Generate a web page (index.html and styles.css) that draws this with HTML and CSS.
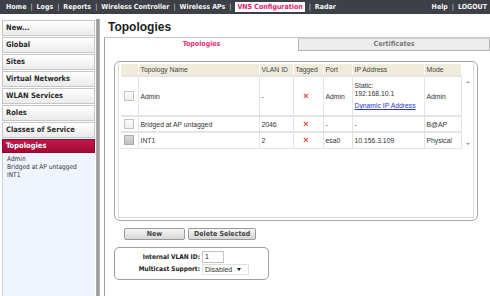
FILE: index.html
```html
<!DOCTYPE html>
<html>
<head>
<meta charset="utf-8">
<link rel="stylesheet" href="styles.css">
</head>
<body>
<div class="topbar">
  <div class="nav">
    <span>Home</span><span class="sep">|</span><span>Logs</span><span class="sep">|</span><span>Reports</span><span class="sep">|</span><span>Wireless Controller</span><span class="sep">|</span><span>Wireless APs</span><span class="sep">|</span><span class="active">VNS Configuration</span><span class="sep">|</span><span>Radar</span>
  </div>
  <div class="nav">
    <span>Help</span><span class="sep">|</span><span>LOGOUT</span>
  </div>
</div>
<div class="main">
  <div class="sidebar">
    <div class="item">New...</div>
    <div class="item">Global</div>
    <div class="item">Sites</div>
    <div class="item">Virtual Networks</div>
    <div class="item">WLAN Services</div>
    <div class="item">Roles</div>
    <div class="item">Classes of Service</div>
    <div class="item selected">Topologies</div>
    <div class="submenu">
      <div>Admin</div>
      <div>Bridged at AP untagged</div>
      <div>INT1</div>
    </div>
  </div>
  <div class="splitter"></div>
  <div class="content">
    <div class="title">Topologies</div>
    <div class="panel">
      <div class="tabs">
        <div class="tab active">Topologies</div>
        <div class="tab">Certificates</div>
      </div>
      <div class="tablebox">
        <div class="inner">
          <table class="grid">
            <colgroup>
              <col class="c-chk"><col class="c-name"><col class="c-vlan"><col class="c-tag"><col class="c-port"><col class="c-ip"><col class="c-mode"><col class="c-scroll">
            </colgroup>
            <thead>
              <tr>
                <th></th><th>Topology Name</th><th>VLAN ID</th><th>Tagged</th><th>Port</th><th>IP Address</th><th>Mode</th><th class="scrollhead"></th>
              </tr>
            </thead>
            <tbody>
              <tr class="tall">
                <td class="chk"><span class="box"></span></td>
                <td>Admin</td>
                <td>-</td>
                <td class="x">×</td>
                <td>Admin</td>
                <td class="ip"><div>Static:</div><div>192.168.10.1</div><div class="link">Dynamic IP Address</div></td>
                <td>Admin</td>
                <td class="scroll" rowspan="3"><div class="scrollinner"><span class="up"></span><span class="down"></span></div></td>
              </tr>
              <tr>
                <td class="chk"><span class="box"></span></td>
                <td>Bridged at AP untagged</td>
                <td>2046</td>
                <td class="x">×</td>
                <td>-</td>
                <td>-</td>
                <td>B@AP</td>
              </tr>
              <tr>
                <td class="chk"><span class="box dis"></span></td>
                <td>INT1</td>
                <td>2</td>
                <td class="x">×</td>
                <td>esa0</td>
                <td>10.156.3.109</td>
                <td>Physical</td>
              </tr>
            </tbody>
          </table>
        </div>
      </div>
      <div class="buttons">
        <div class="btn btn-new">New</div>
        <div class="btn">Delete Selected</div>
      </div>
      <div class="formbox">
        <div class="frow"><span class="lbl">Internal VLAN ID:</span><span class="input">1</span></div>
        <div class="frow"><span class="lbl">Multicast Support:</span><span class="select">Disabled<span class="caret"></span></span></div>
      </div>
    </div>
  </div>
</div>
</body>
</html>
```
FILE: styles.css
```css
* { box-sizing: border-box; }
html, body { margin: 0; padding: 0; }
body {
  width: 490px;
  height: 296px;
  overflow: hidden;
  background: #fff;
  font-family: "Liberation Sans", Arial, sans-serif;
  color: #333;
}
.topbar {
  height: 14px;
  background: #3d4047;
  display: flex;
  justify-content: space-between;
  align-items: center;
  padding: 0 3px 0 6px;
}
.nav {
  display: flex;
  align-items: center;
  font-family: "DejaVu Sans Condensed", "Liberation Sans", sans-serif;
  font-stretch: condensed;
  font-weight: bold;
  font-size: 7px;
  color: #f4f4f4;
}
.nav .sep { margin: 0 4px; color: #ddd; font-weight: normal; }
.nav .active {
  background: #fff;
  color: #e0206e;
  padding: 0 2px;
  line-height: 10px;
}
.main {
  display: flex;
  height: 282px;
}
.sidebar {
  width: 93px;
  margin-left: 2px;
  padding-top: 6px;
  display: flex;
  flex-direction: column;
}
.item {
  height: 16px;
  margin-bottom: 1px;
  border: 1px solid #c6c6c6;
  background: linear-gradient(#ffffff, #ebebeb);
  font-family: "DejaVu Sans Condensed", "Liberation Sans", sans-serif;
  font-stretch: condensed;
  font-weight: bold;
  font-size: 7.5px;
  color: #2a2a2a;
  padding-left: 3px;
  line-height: 14px;
}
.item.selected {
  background: linear-gradient(#c0184a, #a50a36);
  border-color: #8e0a2e;
  color: #fff;
  margin-bottom: 0;
  height: 14px;
  line-height: 12px;
}
.submenu {
  flex: 1;
  background: #eef5fe;
  border-left: 1px solid #c9d3dd;
  padding: 2px 0 0 4px;
  font-family: "DejaVu Sans Condensed", "Liberation Sans", sans-serif;
  font-stretch: condensed;
  font-size: 6.5px;
  line-height: 8px;
  color: #333;
}
.splitter {
  width: 4px;
  margin-top: 5px;
  margin-left: 1px;
  background: linear-gradient(90deg, #b8b8b8, #8d8d8d 50%, #c4c4c4);
}
.content {
  flex: 1;
  margin-left: 4px;
  display: flex;
  flex-direction: column;
}
.title {
  height: 23px;
  padding: 4px 0 0 4px;
  font-size: 12px;
  font-weight: bold;
  line-height: 19px;
  color: #1e1e1e;
}
.panel {
  flex: 1;
  border-left: 1px solid #9c9c9c;
  border-top: 1px solid #c8c8c8;
}
.tabs {
  display: flex;
  height: 13px;
}
.tab {
  font-family: "DejaVu Sans Condensed", "Liberation Sans", sans-serif;
  font-stretch: condensed;
  font-weight: bold;
  font-size: 7px;
  line-height: 12px;
  text-align: center;
}
.tab.active {
  width: 193px;
  color: #e23272;
}
.tab:not(.active) {
  flex: 1;
  background: #ececec;
  border: 1px solid #b4b4b4;
  border-top-color: #d0d0d0;
  color: #7a7a7a;
  line-height: 11px;
}
.tablebox {
  margin: 10px 0 0 9px;
  width: 364px;
  height: 160px;
  border: 1px solid #a6a6a6;
  border-radius: 6px;
  padding: 2px 3px 2px 3px;
}
.inner {
  height: 100%;
  border: 1px solid #dcdcd2;
  border-top: none;
  padding-left: 2px;
}
.grid {
  border-collapse: collapse;
  table-layout: fixed;
  width: 352px;
  font-size: 6.8px;
  color: #333;
}
.c-chk { width: 17px; }
.c-name { width: 121px; }
.c-vlan { width: 34px; }
.c-tag { width: 30px; }
.c-port { width: 29px; }
.c-ip { width: 72px; }
.c-mode { width: 37px; }
.c-scroll { width: 12px; }
.grid th {
  height: 12px;
  background: #efecdc;
  font-weight: normal;
  text-align: left;
  padding: 0 0 0 2px;
  color: #444;
  border-left: 1px solid #fff;
}
.grid th:first-child { border-left: none; }
.grid th.scrollhead { background: #fff; }
.grid td {
  height: 16px;
  padding: 0 0 0 2px;
  border: 1px solid #e4e4e4;
  border-top-width: 2px;
  vertical-align: middle;
  white-space: nowrap;
}
.grid tr.tall td { height: 40px; }
.grid td.chk { padding: 0 0 0 3px; border-left: none; }
.box {
  display: block;
  width: 10px;
  height: 10px;
  border: 1px solid #c4c4c4;
  background: linear-gradient(#fdfdfd, #ededed);
}
.box.dis { background: linear-gradient(#d6d6d6, #c2c2c2); border-color: #aaa; }
.grid td.x {
  color: #e23a3a;
  font-weight: bold;
  font-size: 9px;
  text-align: center;
  padding: 0 4px 0 0;
}
.grid td.ip div { line-height: 8px; }
.grid td.ip .link {
  margin-top: 4px;
  color: #2a35d8;
  text-decoration: underline;
}
.grid td.scroll {
  border: none;
  border-left: 1px solid #e4e4e4;
  padding: 0;
  vertical-align: top;
}
.scrollinner {
  height: 72px;
  display: flex;
  flex-direction: column;
  justify-content: space-between;
  align-items: center;
  padding: 5px 0 3px 1px;
}
.up, .down {
  width: 0;
  height: 0;
  border-left: 2px solid transparent;
  border-right: 2px solid transparent;
}
.up { border-bottom: 2px solid #999; }
.down { border-top: 2px solid #999; }
.buttons {
  display: flex;
  gap: 3px;
  margin: 7px 0 0 19px;
}
.btn {
  height: 12px;
  padding: 0 5px;
  border: 1px solid #9a9a9a;
  border-radius: 2px;
  background: linear-gradient(#f6f6f6, #d6d6d6);
  font-family: "DejaVu Sans Condensed", "Liberation Sans", sans-serif;
  font-stretch: condensed;
  font-weight: bold;
  font-size: 7px;
  line-height: 10px;
  color: #444;
  text-align: center;
}
.btn-new { width: 61px; }
.formbox {
  margin: 7px 0 0 9px;
  width: 155px;
  height: 33px;
  border: 1px solid #9e9e9e;
  border-radius: 5px;
  padding: 3px 0 0 0;
  display: flex;
  flex-direction: column;
  gap: 0;
}
.frow {
  display: flex;
  align-items: center;
  height: 12px;
}
.lbl {
  width: 87px;
  text-align: right;
  font-family: "DejaVu Sans Condensed", "Liberation Sans", sans-serif;
  font-stretch: condensed;
  font-weight: bold;
  font-size: 6.5px;
  color: #222;
  padding-right: 2px;
}
.input {
  width: 22px;
  height: 12px;
  border: 1px solid #c4c4c4;
  font-size: 7px;
  line-height: 10px;
  padding-left: 2px;
  color: #222;
}
.select {
  display: flex;
  align-items: center;
  width: 47px;
  height: 11px;
  border: 1px solid #e0e0e0;
  font-size: 7px;
  padding-left: 2px;
  color: #333;
  gap: 5px;
}
.caret {
  width: 0;
  height: 0;
  border-left: 2px solid transparent;
  border-right: 2px solid transparent;
  border-top: 3px solid #111;
}
```
